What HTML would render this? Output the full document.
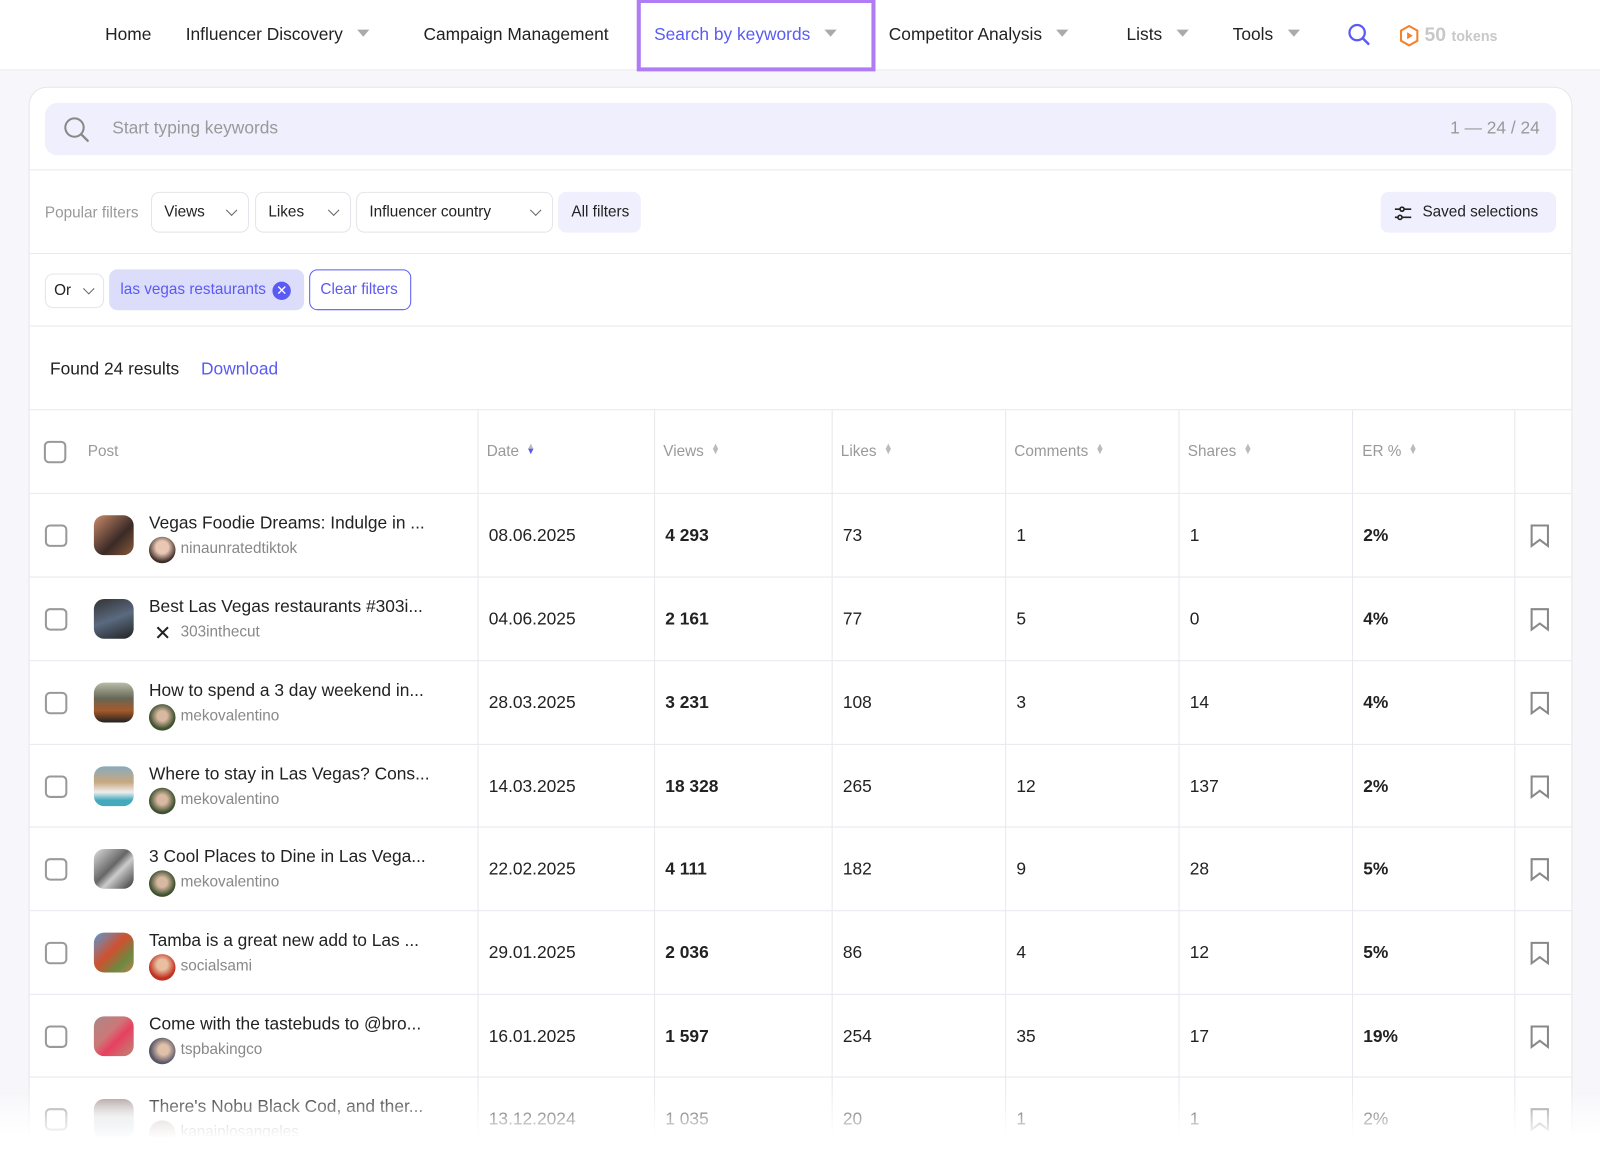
<!DOCTYPE html>
<html><head><meta charset="utf-8">
<style>
*{box-sizing:border-box;margin:0;padding:0}
html,body{width:1600px;height:1157px;overflow:hidden}
body{background:#f7f7fb;font-family:"Liberation Sans",sans-serif;color:#222;position:relative}
#w{position:absolute;left:0;top:0;width:1568px;height:1134px;overflow:hidden;transform:scale(1.0204);transform-origin:0 0}
.nav{position:absolute;left:0;top:0;width:1568px;height:69px;background:#fff;border-bottom:1px solid #ebebf0}
.ni{position:absolute;top:24px;font-size:17px;color:#222;white-space:nowrap}
.tri{display:inline-block;width:0;height:0;border-left:6px solid transparent;border-right:6px solid transparent;border-top:7px solid #aaa;margin-left:14px;vertical-align:3px}
.hl{position:absolute;left:624px;top:0;width:234px;height:70px;border:4px solid #b07cf5;border-top-width:3px}
.card{position:absolute;left:28px;top:85px;width:1513px;height:1060px;background:#fff;border:1px solid #e6e6ec;border-radius:18px;overflow:hidden}
.search{position:absolute;left:15px;top:15px;width:1481px;height:51px;background:#efeffd;border-radius:12px}
.hr{position:absolute;left:0;width:1511px;height:1px;background:#e8e8ee}
.btn{position:absolute;top:102px;height:40px;border:1px solid #e4e4ea;border-radius:8px;background:#fff;font-size:15px;line-height:38px;padding-left:12px;color:#222}
.chev{position:absolute;right:12px;top:13px;width:8px;height:8px;border-right:1.5px solid #666;border-bottom:1.5px solid #666;transform:rotate(45deg)}
.vl{position:absolute;top:316px;width:1px;height:740px;background:#e8e8ee}
.th{position:absolute;top:348px;font-size:15px;color:#999}
.sort{display:inline-block;margin-left:7px;font-size:9px;color:#bbb;line-height:5px;vertical-align:2px}
.row{position:absolute;left:0;width:1511px;height:82px;border-top:1px solid #e8e8ee}
.cb{position:absolute;left:15px;top:30px;width:22px;height:22px;border:2px solid #999;border-radius:5px}
.th1{position:absolute;left:63px;top:21px;width:39px;height:39px;border-radius:10px}
.tt{position:absolute;left:117px;top:19px;font-size:17px;color:#222;white-space:nowrap}
.av{position:absolute;left:117px;top:42px;width:26px;height:26px;border-radius:50%}
.un{position:absolute;left:148px;top:45px;font-size:15px;color:#888}
.c{position:absolute;top:31px;font-size:17px;color:#222}
.b{font-weight:bold}
.bm{position:absolute;left:1470px;top:29px}
.fade{position:absolute;left:0;top:1068px;width:1568px;height:66px;background:linear-gradient(rgba(255,255,255,0),rgba(255,255,255,.6) 40%,#fff 72%)}
</style></head><body>
<div id="w">
<div class="nav">
<span class="ni" style="left:103px">Home</span>
<span class="ni" style="left:182px">Influencer Discovery<span class="tri"></span></span>
<span class="ni" style="left:415px">Campaign Management</span>
<span class="ni" style="left:641px;color:#5a5af5">Search by keywords<span class="tri"></span></span>
<span class="ni" style="left:871px">Competitor Analysis<span class="tri"></span></span>
<span class="ni" style="left:1104px">Lists<span class="tri"></span></span>
<span class="ni" style="left:1208px">Tools<span class="tri"></span></span>
<svg style="position:absolute;left:1320px;top:22px" width="24" height="24" viewBox="0 0 24 24"><circle cx="10" cy="10" r="7.5" fill="none" stroke="#5a5af5" stroke-width="2.2"/><path d="M15.5 15.5L21 21" stroke="#5a5af5" stroke-width="2.4" stroke-linecap="round"/></svg>
<svg style="position:absolute;left:1371px;top:24px" width="20" height="22" viewBox="0 0 20 22"><path d="M10 1.5L18 6v10l-8 4.5L2 16V6z" fill="none" stroke="#f5822a" stroke-width="2"/><path d="M8 7.5v7l5.5-3.5z" fill="#f5822a"/></svg>
<span class="ni" style="left:1396px;top:24px;color:#c8c8c8;font-size:19px;font-weight:bold">50 <span style="font-size:14px">tokens</span></span>
<div class="hl"></div>
</div>
<div class="card">
<div class="search">
<svg style="position:absolute;left:18px;top:13px" width="26" height="26" viewBox="0 0 26 26"><circle cx="11" cy="11" r="9" fill="none" stroke="#888" stroke-width="2"/><path d="M17.5 17.5L24 24" stroke="#888" stroke-width="2.2" stroke-linecap="round"/></svg>
<span style="position:absolute;left:66px;top:15px;font-size:17px;color:#999">Start typing keywords</span>
<span style="position:absolute;right:16px;top:15px;font-size:17px;color:#999">1 — 24 / 24</span>
</div>
<div class="hr" style="top:80px"></div>
<span style="position:absolute;left:15px;top:114px;font-size:15px;color:#999">Popular filters</span>
<div class="btn" style="left:119px;width:96px">Views<i class="chev"></i></div>
<div class="btn" style="left:221px;width:94px">Likes<i class="chev"></i></div>
<div class="btn" style="left:320px;width:193px">Influencer country<i class="chev"></i></div>
<div class="btn" style="left:518px;width:81px;background:#efeffd;border-color:#efeffd">All filters</div>
<div class="btn" style="left:1324px;width:172px;background:#efeffd;border-color:#efeffd;padding-left:40px">
<svg style="position:absolute;left:12px;top:12px" width="18" height="16" viewBox="0 0 18 16"><path d="M1 4h5M10 4h7M1 12h3M8 12h9" stroke="#222" stroke-width="1.6"/><circle cx="8" cy="4" r="2" fill="none" stroke="#222" stroke-width="1.6"/><circle cx="6" cy="12" r="2" fill="none" stroke="#222" stroke-width="1.6"/></svg>Saved selections</div>
<div class="hr" style="top:162px"></div>
<div class="btn" style="left:15px;top:182px;width:58px;height:34px;line-height:32px;padding-left:8px">Or<i class="chev" style="top:10px;right:10px"></i></div>
<div class="btn" style="left:78px;top:178px;width:191px;background:#dcdcfb;border-color:#dcdcfb;color:#5a5af5;padding-left:10px">las vegas restaurants<span style="position:absolute;right:12px;top:11px;width:18px;height:18px;border-radius:50%;background:#5a5af5;color:#fff;font-size:13px;line-height:18px;text-align:center">✕</span></div>
<div class="btn" style="left:274px;top:178px;width:100px;border:1.5px solid #5a5af5;color:#5a5af5;padding-left:10px">Clear filters</div>
<div class="hr" style="top:233px"></div>
<span style="position:absolute;left:20px;top:266px;font-size:17px;color:#222">Found 24 results</span>
<span style="position:absolute;left:168px;top:266px;font-size:17px;color:#5a5af5">Download</span>
<div class="hr" style="top:315px"></div>
<div class="vl" style="left:439px"></div><div class="vl" style="left:612px"></div><div class="vl" style="left:786px"></div><div class="vl" style="left:956px"></div><div class="vl" style="left:1126px"></div><div class="vl" style="left:1296px"></div><div class="vl" style="left:1455px"></div>
<div style="position:absolute;left:14px;top:346px;width:22px;height:22px;border:2px solid #999;border-radius:5px"></div>
<span class="th" style="left:57px">Post</span>
<span class="th" style="left:448px">Date<span class="sort"><span style="color:#bbb">▲</span><br><span style="color:#5a5af5">▼</span></span></span>
<span class="th" style="left:621px">Views<span class="sort">▲<br>▼</span></span>
<span class="th" style="left:795px">Likes<span class="sort">▲<br>▼</span></span>
<span class="th" style="left:965px">Comments<span class="sort">▲<br>▼</span></span>
<span class="th" style="left:1135px">Shares<span class="sort">▲<br>▼</span></span>
<span class="th" style="left:1306px">ER %<span class="sort">▲<br>▼</span></span>

<div class="row" style="top:397px"><i class="cb"></i><i class="th1" style="background:linear-gradient(135deg,#c98b6a,#3a2a26 60%,#8a5a3a)"></i><span class="tt">Vegas Foodie Dreams: Indulge in ...</span><i class="av" style="background:radial-gradient(circle at 50% 40%,#e9c7b4 30%,#3b2a25 70%)"></i><span class="un">ninaunratedtiktok</span><span class="c" style="left:450px">08.06.2025</span><span class="c b" style="left:623px">4 293</span><span class="c" style="left:797px">73</span><span class="c" style="left:967px">1</span><span class="c" style="left:1137px">1</span><span class="c b" style="left:1307px">2%</span><svg class="bm" width="20" height="24" viewBox="0 0 20 24"><path d="M2 2h16v20l-8-6-8 6z" fill="none" stroke="#888" stroke-width="2"/></svg></div>
<div class="row" style="top:479px"><i class="cb"></i><i class="th1" style="background:linear-gradient(160deg,#333,#5a6a80 50%,#222)"></i><span class="tt">Best Las Vegas restaurants #303i...</span><i class="av" style="background:#fff;border:0"></i><span style="position:absolute;left:122px;top:42px;font-size:20px;color:#222">✕</span><span class="un">303inthecut</span><span class="c" style="left:450px">04.06.2025</span><span class="c b" style="left:623px">2 161</span><span class="c" style="left:797px">77</span><span class="c" style="left:967px">5</span><span class="c" style="left:1137px">0</span><span class="c b" style="left:1307px">4%</span><svg class="bm" width="20" height="24" viewBox="0 0 20 24"><path d="M2 2h16v20l-8-6-8 6z" fill="none" stroke="#888" stroke-width="2"/></svg></div>
<div class="row" style="top:561px"><i class="cb"></i><i class="th1" style="background:linear-gradient(180deg,#bba,#665 40%,#a65a2a 70%,#222)"></i><span class="tt">How to spend a 3 day weekend in...</span><i class="av" style="background:radial-gradient(circle at 50% 45%,#d8b8a0 25%,#3e5030 65%)"></i><span class="un">mekovalentino</span><span class="c" style="left:450px">28.03.2025</span><span class="c b" style="left:623px">3 231</span><span class="c" style="left:797px">108</span><span class="c" style="left:967px">3</span><span class="c" style="left:1137px">14</span><span class="c b" style="left:1307px">4%</span><svg class="bm" width="20" height="24" viewBox="0 0 20 24"><path d="M2 2h16v20l-8-6-8 6z" fill="none" stroke="#888" stroke-width="2"/></svg></div>
<div class="row" style="top:643px"><i class="cb"></i><i class="th1" style="background:linear-gradient(180deg,#8ab,#c8a880 40%,#eee 65%,#4ab 85%)"></i><span class="tt">Where to stay in Las Vegas? Cons...</span><i class="av" style="background:radial-gradient(circle at 50% 45%,#d8b8a0 25%,#3e5030 65%)"></i><span class="un">mekovalentino</span><span class="c" style="left:450px">14.03.2025</span><span class="c b" style="left:623px">18 328</span><span class="c" style="left:797px">265</span><span class="c" style="left:967px">12</span><span class="c" style="left:1137px">137</span><span class="c b" style="left:1307px">2%</span><svg class="bm" width="20" height="24" viewBox="0 0 20 24"><path d="M2 2h16v20l-8-6-8 6z" fill="none" stroke="#888" stroke-width="2"/></svg></div>
<div class="row" style="top:724px"><i class="cb"></i><i class="th1" style="background:linear-gradient(135deg,#ddd,#666 45%,#ccc 60%,#333)"></i><span class="tt">3 Cool Places to Dine in Las Vega...</span><i class="av" style="background:radial-gradient(circle at 50% 45%,#d8b8a0 25%,#3e5030 65%)"></i><span class="un">mekovalentino</span><span class="c" style="left:450px">22.02.2025</span><span class="c b" style="left:623px">4 111</span><span class="c" style="left:797px">182</span><span class="c" style="left:967px">9</span><span class="c" style="left:1137px">28</span><span class="c b" style="left:1307px">5%</span><svg class="bm" width="20" height="24" viewBox="0 0 20 24"><path d="M2 2h16v20l-8-6-8 6z" fill="none" stroke="#888" stroke-width="2"/></svg></div>
<div class="row" style="top:806px"><i class="cb"></i><i class="th1" style="background:linear-gradient(135deg,#5a9ad0,#d05030 45%,#6a8a40 75%,#c08050)"></i><span class="tt">Tamba is a great new add to Las ...</span><i class="av" style="background:radial-gradient(circle at 50% 40%,#e8c0a0 25%,#c03020 65%)"></i><span class="un">socialsami</span><span class="c" style="left:450px">29.01.2025</span><span class="c b" style="left:623px">2 036</span><span class="c" style="left:797px">86</span><span class="c" style="left:967px">4</span><span class="c" style="left:1137px">12</span><span class="c b" style="left:1307px">5%</span><svg class="bm" width="20" height="24" viewBox="0 0 20 24"><path d="M2 2h16v20l-8-6-8 6z" fill="none" stroke="#888" stroke-width="2"/></svg></div>
<div class="row" style="top:888px"><i class="cb"></i><i class="th1" style="background:linear-gradient(135deg,#a88,#c77 40%,#e84060 60%,#b87)"></i><span class="tt">Come with the tastebuds to @bro...</span><i class="av" style="background:radial-gradient(circle at 55% 45%,#e0c0a8 25%,#556 65%)"></i><span class="un">tspbakingco</span><span class="c" style="left:450px">16.01.2025</span><span class="c b" style="left:623px">1 597</span><span class="c" style="left:797px">254</span><span class="c" style="left:967px">35</span><span class="c" style="left:1137px">17</span><span class="c b" style="left:1307px">19%</span><svg class="bm" width="20" height="24" viewBox="0 0 20 24"><path d="M2 2h16v20l-8-6-8 6z" fill="none" stroke="#888" stroke-width="2"/></svg></div>
<div class="row" style="top:969px"><i class="cb"></i><i class="th1" style="background:linear-gradient(180deg,#a99,#ddd 45%,#bcd)"></i><span class="tt">There's Nobu Black Cod, and ther...</span><i class="av" style="background:#cbb"></i><span class="un">kanainlosangeles</span><span class="c" style="left:450px">13.12.2024</span><span class="c" style="left:623px">1 035</span><span class="c" style="left:797px">20</span><span class="c" style="left:967px">1</span><span class="c" style="left:1137px">1</span><span class="c" style="left:1307px">2%</span><svg class="bm" width="20" height="24" viewBox="0 0 20 24"><path d="M2 2h16v20l-8-6-8 6z" fill="none" stroke="#888" stroke-width="2"/></svg></div>
</div>
<div class="fade"></div>
</div>
</body></html>
